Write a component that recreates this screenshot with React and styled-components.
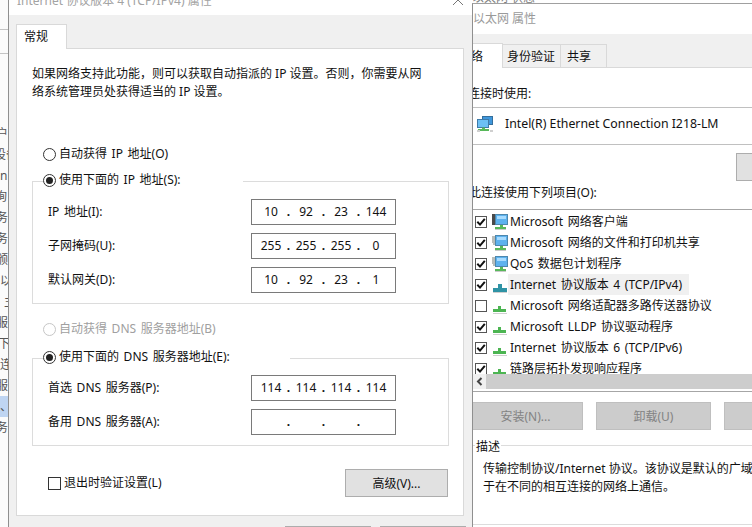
import React from "react";
import styled, { createGlobalStyle } from "styled-components";

const Global = createGlobalStyle`
  html, body { margin: 0; padding: 0; background: #fff; }
  * { box-sizing: border-box; }
`;

const FONT = `"Noto Sans", "Noto Sans CJK SC", sans-serif`;

const Desktop = styled.div`
  position: relative;
  width: 752px;
  height: 527px;
  overflow: hidden;
  background: #fff;
  font: 12px/18px ${FONT};
  color: #111;
`;

/* window behind everything, left sliver */
const BackList = styled.div`
  position: absolute;
  left: 0;
  top: 0;
  width: 8px;
  height: 527px;
  overflow: hidden;
  background: #fbfbfb;
  padding-top: 29px;
`;
const BackRule = styled.div`
  height: 24px;
  border-top: 1px solid #c4c4c4;
`;
const BackRows = styled.div`
  border-top: 1px solid #c4c4c4;
  padding-top: 69px;
`;
const BackRow = styled.div`
  height: 21px;
  line-height: 21px;
  white-space: nowrap;
  color: #555;
  text-indent: ${(p) => p.$x || 0}px;
  background: ${(p) => (p.$selected ? "#bfd5f2" : "transparent")};
`;

const BackTitle = styled.div`
  position: absolute;
  left: 472px;
  top: 0;
  width: 120px;
  height: 3px;
  overflow: hidden;
  color: #808080;
  line-height: 18px;
`;
const BackTitleText = styled.div`
  margin-top: -11px;
  white-space: nowrap;
`;

/* IPv4 dialog */
const Dialog = styled.div`
  position: absolute;
  left: 8px;
  top: 0;
  width: 465px;
  height: 527px;
  display: flex;
  flex-direction: column;
  border-left: 1px solid #8f8f8f;
  background: #f0f0f0;
  overflow: hidden;
`;
const DialogTitle = styled.div`
  height: 15px;
  flex: none;
  background: #fff;
  display: flex;
  justify-content: space-between;
  align-items: flex-start;
  padding: 0 10px 0 8px;
  overflow: hidden;
  color: #a3a3a3;
`;
const ClippedTitle = styled.span`
  margin-top: -8px;
  white-space: nowrap;
`;
const CloseMark = styled.svg`
  width: 10px;
  height: 5px;
  flex: none;
`;
const DialogBody = styled.div`
  flex: 1;
  padding: 0 9px 0 7px;
`;
const TabStrip = styled.div`
  height: ${(p) => p.$h}px;
  display: flex;
  align-items: flex-end;
`;
const DialogTab = styled.div`
  width: 51px;
  height: 25px;
  margin-bottom: -1px;
  position: relative;
  z-index: 1;
  background: #fff;
  border: 1px solid #d9d9d9;
  border-bottom: none;
  padding: 3px 0 0 7px;
`;
const Panel = styled.div`
  height: 468px;
  background: #fff;
  border: 1px solid #d9d9d9;
  display: flex;
  flex-direction: column;
`;
const Intro = styled.div`
  margin: 16px 15px 0;
`;
const RadioRow = styled.div`
  display: flex;
  align-items: center;
  gap: 3px;
  height: 18px;
  margin: ${(p) => p.$top}px 0 0 26px;
  word-spacing: 1.5px;
  color: ${(p) => (p.$off ? "#a0a0a0" : "inherit")};
`;
const RadioDot = styled.span`
  width: 13px;
  height: 13px;
  flex: none;
  border-radius: 50%;
  border: 1px solid ${(p) => (p.$off ? "#c6c6c6" : "#333")};
  display: flex;
  align-items: center;
  justify-content: center;
  &::after {
    content: "";
    width: 7px;
    height: 7px;
    border-radius: 50%;
    background: ${(p) => (p.$on ? "#222" : "transparent")};
  }
`;
const Group = styled.div`
  position: relative;
  margin: ${(p) => p.$top}px 0 0 15px;
  width: 417px;
  border: 1px solid #dcdcdc;
  padding: ${(p) => p.$pad}px 0 10px 15px;
  display: flex;
  flex-direction: column;
  gap: 8px;
`;
const GroupLegend = styled.div`
  position: absolute;
  left: 10px;
  top: -11px;
  width: ${(p) => p.$w}px;
  height: 18px;
  background: #fff;
  display: flex;
  align-items: center;
  gap: 3px;
  word-spacing: 1.5px;
`;
const FieldRow = styled.div`
  display: flex;
  align-items: center;
  height: 26px;
`;
const FieldLabel = styled.div`
  width: 203px;
  flex: none;
  word-spacing: 1.5px;
`;
const AddressBox = styled.div`
  width: 145px;
  height: 26px;
  border: 1px solid #7a7a7a;
  padding-left: 2px;
  display: flex;
  align-items: center;
`;
const Octet = styled.span`
  width: 34px;
  text-align: center;
  flex: none;
`;
const Dot = styled.span`
  width: 1px;
  flex: none;
  display: flex;
  justify-content: center;
  font-weight: 700;
`;
const Footer = styled.div`
  margin: 23px 15px 0 31px;
  display: flex;
  justify-content: space-between;
  align-items: center;
`;
const ExitCheck = styled.div`
  display: flex;
  align-items: center;
  gap: 3px;
`;
const EmptyBox = styled.span`
  width: 13px;
  height: 13px;
  border: 1px solid #333;
`;
const PushButton = styled.div`
  flex: none;
  width: ${(p) => p.$w}px;
  height: ${(p) => p.$h}px;
  padding-top: 1px;
  background: ${(p) => (p.$off ? "#cccccc" : "#e1e1e1")};
  border: 1px solid ${(p) => (p.$off ? "#bfbfbf" : "#adadad")};
  color: ${(p) => (p.$off ? "#838383" : "inherit")};
  display: flex;
  align-items: center;
  justify-content: center;
`;
const BottomButtons = styled.div`
  display: flex;
  justify-content: flex-end;
  gap: 9px;
  margin: 10px -2px 0 0;
`;

/* Ethernet properties */
const EthWindow = styled.div`
  position: absolute;
  left: 472px;
  top: 3px;
  width: 280px;
  height: 524px;
  border-top: 1px solid #a0a0a0;
  border-left: 1px solid #8f8f8f;
  background: #fff;
  overflow: hidden;
  display: flex;
  flex-direction: column;
`;
const EthTitle = styled.div`
  height: 30px;
  flex: none;
  display: flex;
  align-items: center;
  padding: 0 0 1px 0;
  color: #9a9a9a;
`;
const EthStrip = styled.div`
  background: #f0f0f0;
  flex: none;
`;
const EthTab = styled.div`
  flex: none;
  width: ${(p) => p.$w}px;
  height: ${(p) => (p.$active ? 25 : 23)}px;
  margin-bottom: ${(p) => (p.$active ? -1 : 0)}px;
  margin-left: ${(p) => (p.$active ? 0 : -1)}px;
  position: relative;
  z-index: ${(p) => (p.$active ? 1 : 0)};
  background: ${(p) => (p.$active ? "#fff" : "#f0f0f0")};
  border: 1px solid #d9d9d9;
  border-left: ${(p) => (p.$active ? "none" : "1px solid #d9d9d9")};
  border-bottom: ${(p) => (p.$active ? "none" : "0")};
  display: flex;
  align-items: center;
  justify-content: ${(p) => (p.$active ? "flex-end" : "flex-start")};
  padding: 2px ${(p) => (p.$active ? 19 : 0)}px 0 ${(p) => p.$pad || 0}px;
  overflow: hidden;
  white-space: nowrap;
`;
const EthPanel = styled.div`
  flex: 1;
  border-top: 1px solid #d9d9d9;
  display: flex;
  flex-direction: column;
  min-width: 0;
`;
const CutLabel = styled.div`
  margin: ${(p) => p.$top}px 0 0 ${(p) => p.$left}px;
  height: 18px;
  flex: none;
  white-space: nowrap;
`;
const AdapterBox = styled.div`
  height: 38px;
  flex: none;
  margin-top: 4px;
  border-top: 1px solid #c0c0c0;
  border-bottom: 1px solid #c0c0c0;
  padding: 0 0 5px 4px;
  display: flex;
  align-items: center;
  gap: 12px;
  font-size: 12.3px;
`;
const AdapterIcon = styled.svg`
  width: 16px;
  height: 16px;
  flex: none;
`;
const ConfigButton = styled(PushButton)`
  margin: 8px 0 0 263px;
`;
const ItemList = styled.div`
  margin-top: 7px;
  height: 183px;
  flex: none;
  border-top: 1px solid #a6a6a6;
  border-bottom: 1px solid #a6a6a6;
  display: flex;
  flex-direction: column;
`;
const ItemScroll = styled.div`
  height: 164px;
  flex: none;
  overflow: hidden;
  padding-top: 1px;
`;
const Item = styled.div`
  height: 21px;
  display: flex;
  align-items: center;
  padding-left: 2px;
  white-space: nowrap;
`;
const CheckBox = styled.span`
  width: 12px;
  height: 12px;
  flex: none;
  border: 1px solid #555;
  display: flex;
`;
const CheckMark = styled.svg`
  width: 10px;
  height: 10px;
`;
const ItemIcon = styled.svg`
  width: 16px;
  height: 16px;
  margin-left: 5px;
  flex: none;
`;
const ItemLabel = styled.span`
  height: 21px;
  line-height: 21px;
  padding: 0 7px 0 2px;
  word-spacing: 1.5px;
  background: ${(p) => (p.$hi ? "#f0f0f0" : "transparent")};
`;
const ScrollBar = styled.div`
  height: 15px;
  flex: none;
  display: flex;
  background: #cdcdcd;
`;
const ScrollArrow = styled.div`
  width: 13px;
  background: #f0f0f0;
  display: flex;
  align-items: center;
  justify-content: center;
`;
const ArrowGlyph = styled.svg`
  width: 7px;
  height: 9px;
`;
const ActionRow = styled.div`
  display: flex;
  gap: 13px;
  margin: 10px 0 0 -5px;
  flex: none;
`;
const DescGroup = styled.div`
  position: relative;
  flex: none;
  height: 80px;
  margin-top: 15px;
  border-top: 1px solid #dcdcdc;
  border-bottom: 1px solid #dcdcdc;
  padding: 14px 0 0 10px;
  white-space: nowrap;
`;
const DescLegend = styled.span`
  position: absolute;
  left: 2px;
  top: -8px;
  padding: 0 1px;
  background: #fff;
`;

const backRows = [
  { t: "户", x: -4 }, { t: "设备", x: -6 }, { t: "nl(" }, { t: "询", x: -5 }, { t: "务", x: -4 }, { t: "务", x: -4 },
  { t: "颁", x: -4 }, { t: "以" }, { t: "主", x: 4 }, { t: "服", x: -4 }, { t: "下", x: -2 }, { t: "连" },
  { t: "服", x: -4 }, { t: "、", selected: true }, { t: "务", x: -4 },
];

function MonitorGlyph({ gear, server }) {
  return (
    <ItemIcon viewBox="0 0 16 16">
      {gear && <path d="M0 1h4v1h1v7H4v1H1V8H0z" fill="#b9bdb9" />}
      {server && <path d="M0 0h5v11H0z" fill="#4a4a4a" />}
      <rect x="3.5" y="0.5" width="12" height="10" fill="#5db2ee" stroke="#4d87ad" />
      <rect x="5" y="2" width="9" height="3" fill="#a8dcff" />
      <path d="M8 11h3v2h3v2H3v-2h5z" fill="#58b85a" />
      <path d="M3 15h11v1H3z" fill="#c9c9c9" />
    </ItemIcon>
  );
}

function ProtocolGlyph({ teal }) {
  const c = teal ? "#2f93a5" : "#4cb552";
  return (
    <ItemIcon viewBox="0 0 16 16">
      <path d={teal ? "M6 7h4v4h5v4H1v-4h5z" : "M6 8h3v3h5v3H1v-3h5z"} fill={c} />
      <path d="M1 15h14v1H1z" fill="#cfcfcf" />
    </ItemIcon>
  );
}

function Check() {
  return (
    <CheckBox>
      <CheckMark viewBox="0 0 10 10">
        <path d="M1.3 4.8 4 7.6 8.8 1.8" fill="none" stroke="#111" strokeWidth="2" />
      </CheckMark>
    </CheckBox>
  );
}

function Address({ parts }) {
  return (
    <AddressBox>
      {parts.map((p, i) => (
        <React.Fragment key={i}>
          <Octet>{p}</Octet>
          {i < 3 && <Dot>.</Dot>}
        </React.Fragment>
      ))}
    </AddressBox>
  );
}

const items = [
  { label: "Microsoft 网络客户端", icon: "server", on: true },
  { label: "Microsoft 网络的文件和打印机共享", icon: "gear", on: true },
  { label: "QoS 数据包计划程序", icon: "gear", on: true },
  { label: "Internet 协议版本 4 (TCP/IPv4)", icon: "teal", on: true, hi: true },
  { label: "Microsoft 网络适配器多路传送器协议", icon: "proto", on: false },
  { label: "Microsoft LLDP 协议驱动程序", icon: "proto", on: true },
  { label: "Internet 协议版本 6 (TCP/IPv6)", icon: "proto", on: true },
  { label: "链路层拓扑发现响应程序", icon: "proto", on: true },
];

export default function App() {
  return (
    <Desktop>
      <Global />
      <BackList>
        <BackRule />
        <BackRows>
          {backRows.map((r, i) => (
            <BackRow key={i} $x={r.x} $selected={r.selected}>{r.t}</BackRow>
          ))}
        </BackRows>
      </BackList>
      <BackTitle>
        <BackTitleText>以太网 状态</BackTitleText>
      </BackTitle>

      <Dialog>
        <DialogTitle>
          <ClippedTitle>Internet 协议版本 4 (TCP/IPv4) 属性</ClippedTitle>
          <CloseMark viewBox="0 0 10 5">
            <path d="M0 -5 5 0 10 -5M0 5 5 0 10 5" fill="none" stroke="#777" />
          </CloseMark>
        </DialogTitle>
        <DialogBody>
          <TabStrip $h={33}>
            <DialogTab>常规</DialogTab>
          </TabStrip>
          <Panel>
            <Intro>
              如果网络支持此功能，则可以获取自动指派的 IP 设置。否则，你需要从网
              <br />
              络系统管理员处获得适当的 IP 设置。
            </Intro>
            <RadioRow $top={44}>
              <RadioDot />
              自动获得 IP 地址(O)
            </RadioRow>
            <Group $top={18} $pad={17}>
              <GroupLegend $w={200}>
                <RadioDot $on />
                使用下面的 IP 地址(S):
              </GroupLegend>
              <FieldRow>
                <FieldLabel>IP 地址(I):</FieldLabel>
                <Address parts={["10", "92", "23", "144"]} />
              </FieldRow>
              <FieldRow>
                <FieldLabel>子网掩码(U):</FieldLabel>
                <Address parts={["255", "255", "255", "0"]} />
              </FieldRow>
              <FieldRow>
                <FieldLabel>默认网关(D):</FieldLabel>
                <Address parts={["10", "92", "23", "1"]} />
              </FieldRow>
            </Group>
            <RadioRow $top={16} $off>
              <RadioDot $off />
              自动获得 DNS 服务器地址(B)
            </RadioRow>
            <Group $top={20} $pad={16}>
              <GroupLegend $w={247}>
                <RadioDot $on />
                使用下面的 DNS 服务器地址(E):
              </GroupLegend>
              <FieldRow>
                <FieldLabel>首选 DNS 服务器(P):</FieldLabel>
                <Address parts={["114", "114", "114", "114"]} />
              </FieldRow>
              <FieldRow>
                <FieldLabel>备用 DNS 服务器(A):</FieldLabel>
                <Address parts={["", "", "", ""]} />
              </FieldRow>
            </Group>
            <Footer>
              <ExitCheck>
                <EmptyBox />
                退出时验证设置(L)
              </ExitCheck>
              <PushButton $w={103} $h={28}>高级(V)...</PushButton>
            </Footer>
          </Panel>
          <BottomButtons>
            <PushButton $w={86} $h={23} />
            <PushButton $w={86} $h={23} />
          </BottomButtons>
        </DialogBody>
      </Dialog>

      <EthWindow>
        <EthTitle>以太网 属性</EthTitle>
        <EthStrip>
          <TabStrip $h={33}>
            <EthTab $active $w={30}>网络</EthTab>
            <EthTab $w={59} $pad={4}>身份验证</EthTab>
            <EthTab $w={47} $pad={6}>共享</EthTab>
          </TabStrip>
        </EthStrip>
        <EthPanel>
          <CutLabel $top={17} $left={-5}>连接时使用:</CutLabel>
          <AdapterBox>
            <AdapterIcon viewBox="0 0 16 16">
              <rect x="5.5" y="0.5" width="10" height="8" fill="#3f97dc" stroke="#356f9c" />
              <rect x="0.5" y="3.5" width="11" height="8" fill="#6cc0f5" stroke="#3f7ba8" />
              <path d="M5 11.5h3V13h4v2H1v-2h4z" fill="#58b85a" />
              <path d="M0 14h3v2H0zM13 14h3v2h-3z" fill="#cfcfcf" />
            </AdapterIcon>
            Intel(R) Ethernet Connection I218-LM
          </AdapterBox>
          <ConfigButton $w={100} $h={28} />
          <CutLabel $top={3} $left={-4}>此连接使用下列项目(O):</CutLabel>
          <ItemList>
            <ItemScroll>
              {items.map((it) => (
                <Item key={it.label}>
                  {it.on ? <Check /> : <CheckBox />}
                  {it.icon === "server" && <MonitorGlyph server />}
                  {it.icon === "gear" && <MonitorGlyph gear />}
                  {it.icon === "teal" && <ProtocolGlyph teal />}
                  {it.icon === "proto" && <ProtocolGlyph />}
                  <ItemLabel $hi={it.hi}>{it.label}</ItemLabel>
                </Item>
              ))}
            </ItemScroll>
            <ScrollBar>
              <ScrollArrow>
                <ArrowGlyph viewBox="0 0 7 9">
                  <path d="M5.5 1 2 4.5 5.5 8" fill="none" stroke="#444" strokeWidth="2" />
                </ArrowGlyph>
              </ScrollArrow>
            </ScrollBar>
          </ItemList>
          <ActionRow>
            <PushButton $off $w={115} $h={28}>安装(N)...</PushButton>
            <PushButton $off $w={115} $h={28}>卸载(U)</PushButton>
            <PushButton $off $w={115} $h={28}>属性(R)</PushButton>
          </ActionRow>
          <DescGroup>
            <DescLegend>描述</DescLegend>
            传输控制协议/Internet 协议。该协议是默认的广域网络协议，用
            <br />
            于在不同的相互连接的网络上通信。
          </DescGroup>
        </EthPanel>
      </EthWindow>
    </Desktop>
  );
}
